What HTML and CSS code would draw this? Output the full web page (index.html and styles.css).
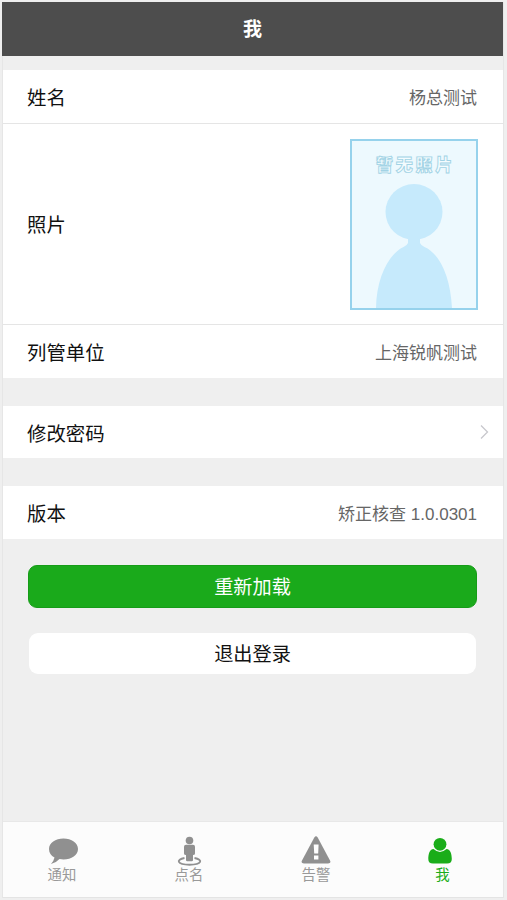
FILE: index.html
```
<!DOCTYPE html>
<html lang="zh-CN">
<head>
<meta charset="utf-8">
<title>我</title>
<link rel="stylesheet" href="styles.css">
</head>
<body>
<div class="app">
  <header class="header">我</header>
  <main class="content">
    <section class="group">
      <div class="row"><span>姓名</span><span class="value">杨总测试</span></div>
      <div class="row row-photo">
        <span>照片</span>
        <svg class="photo" width="128" height="171" viewBox="0 0 128 171">
          <rect x="1" y="1" width="126" height="169" fill="#edf9fe" stroke="#96d2ec" stroke-width="2"/>
          <text class="photo-text" x="65.5" y="31.5" text-anchor="middle">暂无照片</text>
          <ellipse cx="64" cy="73" rx="28.5" ry="28" fill="#c6eafc"/>
          <path d="M58 98H70V104Q70.500 106 74.500 108C90.500 115 100.500 139 102 169H26C26.500 139 38.500 115 53.500 108Q57.500 106 58 104Z" fill="#c6eafc"/>
        </svg>
      </div>
      <div class="row"><span>列管单位</span><span class="value">上海锐帆测试</span></div>
    </section>
    <section class="group">
      <div class="row row-link"><span>修改密码</span>
        <svg class="chevron" width="9" height="16" viewBox="0 0 9 16"><path d="M1 1.5L7.5 8L1 14.5" fill="none" stroke="#c8c8cd" stroke-width="1.3"/></svg>
      </div>
    </section>
    <section class="group">
      <div class="row"><span>版本</span><span class="value">矫正核查 1.0.0301</span></div>
    </section>
    <div class="actions">
      <button class="btn btn-primary">重新加载</button>
      <button class="btn btn-plain">退出登录</button>
    </div>
  </main>
  <nav class="tabs">
    <a class="tab">
      <svg class="icon-chat" width="30" height="30" viewBox="0 0 30 30"><path d="M15.500 2.500C23.500 2.500 30 6.800 30 13S23.500 23.500 15.500 23.500Q13.500 23.500 11.500 23.100Q8 27 3 28Q5.800 25 6.500 21.500C3 19.500 1 17 1 13C1 6.800 7.500 2.500 15.500 2.500Z" fill="#909090"/></svg>
      <span>通知</span>
    </a>
    <a class="tab">
      <svg width="30" height="30" viewBox="0 0 30 30"><g fill="#909090"><circle cx="15.500" cy="4.500" r="3.800"/><path d="M12 8.800H19Q21 8.800 21 10.700V17.500Q21 19 19 19V24Q19 25.300 17.700 25.300H13.300Q12 25.300 12 24V19Q10 19 10 17.500V10.700Q10 8.800 12 8.800Z"/></g><path d="M10.500 22C1.500 23.500 3 28.700 15.500 28.700S29.500 23.500 20.500 22" fill="none" stroke="#909090" stroke-width="1.900"/></svg>
      <span>点名</span>
    </a>
    <a class="tab">
      <svg width="30" height="30" viewBox="0 0 30 30"><path d="M13.300 1.500Q15 -.8 16.700 1.500L29 24.500Q30.500 27.500 27 27.500H3Q-.5 27.500 1 24.500Z" fill="#909090"/><path d="M12.700 8.500H17.600L17.200 17.500H13.200ZM13 19.500H17.400V23.500H13Z" fill="#fff"/></svg>
      <span>告警</span>
    </a>
    <a class="tab tab-active">
      <svg class="icon-me" width="30" height="30" viewBox="0 0 30 30"><g fill="#1aad19"><circle cx="15" cy="8.300" r="6.400"/><path d="M8.500 13Q15 18.800 21.500 13C25.500 13.500 26.800 18 26.800 23Q26.800 27.500 22 27.500H8Q3.300 27.500 3.300 23C3.300 18 4.500 13.500 8.500 13Z"/></g></svg>
      <span>我</span>
    </a>
  </nav>
</div>
</body>
</html>
```
FILE: styles.css
```
* { box-sizing: border-box; }
body {
  margin: 0;
  height: 900px;
  padding: 2px 3px 2px 2px;
  background: #efefef;
  font-family: "Liberation Sans", "Noto Sans CJK SC", sans-serif;
  color: #111;
}
.app {
  height: 896px;
  display: flex;
  flex-direction: column;
  border-left: 1px solid #e6e6e6;
  border-right: 1px solid #e6e6e6;
}
.header {
  height: 54px;
  margin: 0 0 0 -1px;
  background: #4d4d4d;
  color: #fff;
  font-size: 19px;
  font-weight: 700;
  line-height: 56px;
  text-align: center;
}
.content {
  flex: 1;
  padding-top: 14px;
  display: flex;
  flex-direction: column;
  gap: 28px;
}
.group { background: #fff; }
.row {
  display: flex;
  align-items: center;
  justify-content: space-between;
  height: 53px;
  padding: 0 26px 1px 24px;
  font-size: 19.4px;
}
.row + .row { height: 54px; border-top: 1px solid #e5e5e5; }
.row.row-photo { height: 201px; padding: 0 25px 0 24px; }
.row.row-photo span { padding-bottom: 2px; }
.row.row-link { height: 52px; padding: 0 14px 0 24px; }
.value { font-size: 17px; color: #666; }
.photo-text {
  font-family: "Noto Sans CJK SC", sans-serif;
  font-size: 17px;
  font-weight: 900;
  letter-spacing: 2.8px;
  fill: #f4fcff;
  stroke: #a2d3e5;
  stroke-width: .9px;
}
.actions {
  display: flex;
  flex-direction: column;
  gap: 25px;
  padding: 0 26px 0 25px;
  margin-top: -2px;
}
.btn {
  height: 43px;
  border: 0;
  border-radius: 9px;
  font: inherit;
  font-size: 19.2px;
  padding: 0 0 1px;
}
.btn-primary { background: #1aaa1b; border: 1px solid #169c18; color: #fff; }
.btn-plain { height: 41px; margin: 0 1px; background: #fff; color: #111; }
.tabs {
  height: 77px;
  display: grid;
  grid-template-columns: 118px 136px 118px 1fr;
  padding: 14px 0 0;
  background: #fcfcfc;
  border-top: 1px solid #e8e8e8;
  border-bottom: 1px solid #e4e4e4;
}
.tab {
  display: flex;
  flex-direction: column;
  align-items: center;
  font-size: 14.4px;
  line-height: 20px;
  color: #999;
}
.tab svg { flex: none; margin-bottom: -1px; }
.tab .icon-chat { margin-left: 2px; }
.tab-active { padding-left: 7px; color: #1aad19; }
.icon-me { margin-right: 5px; }
```
